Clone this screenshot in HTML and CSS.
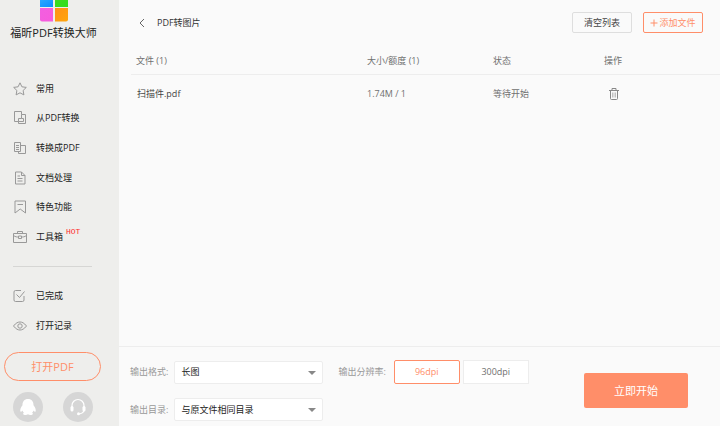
FILE: index.html
```
<!DOCTYPE html>
<html lang="zh-CN">
  <head>
    <meta charset="UTF-8" />
    <meta name="viewport" content="width=device-width, initial-scale=1" />
    <title>福昕PDF转换大师</title>
    <link rel="stylesheet" href="styles.css">
  </head>

  <body>
    <aside class="sidebar">
      <div class="brand">
        <svg class="logo" viewBox="0 0 28 22" aria-hidden="true">
          <defs>
            <linearGradient id="blue" x2="1" y2="1"><stop stop-color="#2aa8ff" /><stop offset="1" stop-color="#0c8cff" /></linearGradient>
            <linearGradient id="green" x2="1" y2="1"><stop stop-color="#3fd820" /><stop offset="1" stop-color="#2ee01c" /></linearGradient>
            <linearGradient id="pink" x2="1" y2="1"><stop stop-color="#f25fe0" /><stop offset="1" stop-color="#f75bdc" /></linearGradient>
            <linearGradient id="orange" x2="1" y2="1"><stop stop-color="#ff9016" /><stop offset="1" stop-color="#ffa60c" /></linearGradient>
          </defs>
          <path fill="url(#blue)" d="M0 0h13v7H0z" />
          <path fill="url(#green)" d="M15 0h13v7H15z" />
          <path fill="url(#pink)" d="M0 8h13v13.500H2a2 2 0 0 1-2-2z" />
          <path fill="url(#orange)" d="M15 8h13v11.500a2 2 0 0 1-2 2H15z" />
        </svg>
        <h1>福昕PDF转换大师</h1>
      </div>

      <nav class="menu">
        <a href="#">
          <svg viewBox="0 0 14 14"><path d="M7 .8l1.900 4 4.400.6-3.200 3.100.8 4.400L7 10.800l-3.900 2.100.8-4.400L.7 5.400l4.400-.6z" /></svg>
          常用
        </a>
        <a href="#">
          <svg viewBox="0 0 14 14"><path d="M5.500 10.500h-4v-10h7v3M5.500 10.500v2h7v-9h-4v4h-3v3M8.500 7.500h2v3h-5" /></svg>
          从PDF转换
        </a>
        <a href="#">
          <svg viewBox="0 0 14 14"><path d="M1.500 1.500h6v9h-6zM3 4.500h3M3 6.500h3M3 8.500h3M7.500 4.500h5v8h-7v-2" /></svg>
          转换成PDF
        </a>
        <a href="#">
          <svg viewBox="0 0 14 14"><path d="M2.500 1h6l3.500 3.500V13H2.500zM8.500 1v3.500H12M4.500 5H7M4.500 7.500h5M4.500 10h5" /></svg>
          文档处理
        </a>
        <a href="#">
          <svg viewBox="0 0 14 14"><path d="M2 1h10.500v12L7.200 9 2 13zM4.500 4.500H10" /></svg>
          特色功能
        </a>
        <a href="#">
          <svg viewBox="0 0 14 14"><path d="M.5 3.500h13v9H.5zM4.500 3.500v-2h5v2M.5 5.500c2 1.500 3.500 1.500 5 1.500M13.500 5.500c-2 1.500-3.500 1.500-5 1.500M5.500 6h3v2.500h-3z" /></svg>
          工具箱
          <sup class="hot">HOT</sup>
        </a>
        <div class="divider"></div>
        <a href="#">
          <svg viewBox="0 0 14 14"><path d="M8 1.500H2.500A1.500 1.500 0 0 0 1 3v8a1.500 1.500 0 0 0 1.500 1.500h7A1.500 1.500 0 0 0 11 11V7M3.500 5.500l3 3 5-6" /></svg>
          已完成
        </a>
        <a href="#">
          <svg viewBox="0 0 14 14"><path d="M.5 7C3 3.800 5 3 7 3s4 .8 6.500 4C11 10.200 9 11 7 11S3 10.200.5 7z" /><circle cx="7" cy="7" r="2.200" /></svg>
          打开记录
        </a>
      </nav>

      <button class="open-pdf" type="button">打开PDF</button>

      <div class="contacts">
        <button type="button" aria-label="QQ">
          <svg viewBox="0 0 30 30"><path fill="#fff" d="M15 7c-3.700 0-5.600 2.500-5.500 6.300-1.600 2-2.600 4.300-2.200 6 .3 1 1.400.2 2.100-.9.300 1 .9 1.800 1.500 2.400-1.200.6-1.200 2 .7 2.200 1.400.1 2.800-.2 3.400-.8.600.6 2 .9 3.400.8 1.900-.2 1.900-1.600.7-2.200.6-.6 1.200-1.400 1.500-2.400.7 1.100 1.800 1.900 2.100.9.400-1.700-.6-4-2.200-6C20.600 9.500 18.700 7 15 7z" /></svg>
        </button>
        <button type="button" aria-label="在线客服">
          <svg viewBox="0 0 30 30">
            <path fill="none" stroke="#fff" stroke-width="1.200" d="M9 15v-1.500a6 6 0 0 1 12 0V15M21 18c-.3 2.500-2 3.500-4.500 3.800" />
            <rect x="7.500" y="14" width="3" height="5.500" rx="1.500" fill="#fff" />
            <rect x="19.500" y="14" width="3" height="5.500" rx="1.500" fill="#fff" />
            <circle cx="15.500" cy="21.800" r="1.500" fill="#fff" />
          </svg>
        </button>
      </div>
    </aside>

    <main>
      <header>
        <button class="back" type="button" aria-label="返回">
          <svg viewBox="0 0 8 10"><path d="M6 1L2 5l4 4" /></svg>
        </button>
        <h2>PDF转图片</h2>
        <button class="btn" type="button">清空列表</button>
        <button class="btn btn-add" type="button">
          <svg viewBox="0 0 8 8"><path d="M4 .5v7M.5 4h7" /></svg>
          添加文件
        </button>
      </header>

      <section class="files">
        <table>
          <thead>
            <tr>
              <th>文件 (1)</th>
              <th class="col-size">大小/额度 (1)</th>
              <th class="col-status">状态</th>
              <th class="col-action">操作</th>
            </tr>
          </thead>
          <tbody>
            <tr>
              <td class="name">扫描件.pdf</td>
              <td>1.74M / 1</td>
              <td>等待开始</td>
              <td>
                <button class="delete" type="button" aria-label="删除">
                  <svg viewBox="0 0 10 12"><path d="M0 2.500h10M3 2.500v-2h4v2M1.500 2.500v8a1 1 0 0 0 1 1h5a1 1 0 0 0 1-1v-8" /><path class="slats" d="M3.500 4.500v5M5 4.500v5M6.500 4.500v5" /></svg>
                </button>
              </td>
            </tr>
          </tbody>
        </table>
      </section>

      <form class="options">
        <div class="fields">
          <label for="format">输出格式:</label>
          <div class="select">
            <select id="format"><option>长图</option></select>
          </div>
          <fieldset>
            <legend>输出分辨率:</legend>
            <label class="dpi"><input type="radio" name="dpi" checked />96dpi</label>
            <label class="dpi"><input type="radio" name="dpi" />300dpi</label>
          </fieldset>
          <label for="folder">输出目录:</label>
          <div class="select">
            <select id="folder"><option>与原文件相同目录</option></select>
          </div>
        </div>
        <button class="start" type="button">立即开始</button>
      </form>
    </main>
  </body>
</html>
```
FILE: styles.css
```
:root {
  --bg: #fafafa;
  --side-bg: #eeeeec;
  --accent: #ff8e69;
  --border: #dedede;
  --line: #ededed;
  --text: #222;
  --text-mid: #707070;
  --text-muted: #999;
}

* {
  box-sizing: border-box;
}

body,
button,
select {
  font-family: "Open Sans", "Noto Sans CJK SC", sans-serif;
  font-size: 9px;
  line-height: 14px;
}

body {
  margin: 0;
  height: 100vh;
  display: flex;
  overflow: hidden;
  background: var(--bg);
  color: var(--text);
}

button {
  padding: 0;
  border: none;
  background: none;
  color: inherit;
  cursor: pointer;
}

svg {
  display: block;
  flex: none;
}

/* sidebar */
.sidebar {
  flex: 0 0 119px;
  display: flex;
  flex-direction: column;
  padding-bottom: 4px;
  background: var(--side-bg);
}

.brand {
  display: flex;
  flex-direction: column;
  align-items: center;
  gap: 3px;
  padding-right: 12px;
  margin-bottom: 33px;
}

.logo {
  width: 28px;
  height: 22px;
}

.brand h1 {
  margin: 0;
  font-size: 11px;
  font-weight: 400;
  line-height: 16px;
  white-space: nowrap;
}

.menu {
  flex: 1;
  display: grid;
  grid-auto-rows: 1fr;
  align-items: center;
  padding: 0 13px;
}

.menu a {
  display: flex;
  align-items: center;
  gap: 9px;
  color: var(--text);
  text-decoration: none;
}

.menu svg {
  width: 14px;
  height: 14px;
  fill: none;
  stroke: #999;
}

.menu .hot {
  align-self: flex-start;
  margin: -2px 0 0 -6px;
  color: #ff2a2a;
  font-family: "Liberation Mono", monospace;
  font-size: 8px;
  line-height: 8px;
}

.divider {
  width: 79px;
  border-top: 1px solid #d6d6d4;
}

.open-pdf {
  height: 29px;
  margin: 11px 18px 11px 4px;
  border: 1px solid var(--accent);
  border-radius: 15px;
  color: var(--accent);
  font-size: 11px;
}

.contacts {
  display: flex;
  gap: 20px;
  padding-left: 13px;
}

.contacts button {
  width: 30px;
  height: 30px;
  border-radius: 50%;
  background: #d6d6d6;
}

/* main area */
main {
  flex: 1;
  min-width: 0;
  display: flex;
  flex-direction: column;
}

header {
  display: flex;
  align-items: center;
  gap: 11px;
  padding: 12px 17px 12px 19px;
}

header h2 {
  flex: 1;
  margin: 0;
  color: #333;
  font-size: 9px;
  font-weight: 400;
}

.back svg {
  width: 8px;
  height: 10px;
  fill: none;
  stroke: #666;
}

.btn {
  width: 60px;
  height: 21px;
  border: 1px solid var(--border);
  border-radius: 2px;
  color: #444;
}

.btn-add {
  display: flex;
  align-items: center;
  justify-content: center;
  gap: 1px;
  border-color: var(--accent);
  color: var(--accent);
}

.btn-add svg {
  width: 8px;
  height: 8px;
  stroke: currentColor;
}

.files {
  flex: 1;
  padding-left: 12px;
}

table {
  width: 100%;
  table-layout: fixed;
  border-collapse: collapse;
  color: var(--text-mid);
}

th,
td {
  padding: 0;
  font-weight: 400;
  text-align: left;
}

th {
  height: 29px;
  padding-top: 4px;
  border-bottom: 1px solid var(--line);
}

td {
  height: 39px;
}

th:first-child {
  padding-left: 5px;
}

.name {
  padding-left: 6px;
  color: #444;
}

.col-size {
  width: 126px;
}

.col-status {
  width: 111px;
}

.col-action {
  width: 116px;
}

.delete {
  display: block;
  margin-left: 5px;
}

.delete svg {
  width: 10px;
  height: 12px;
  fill: none;
  stroke: #888;
}

.delete .slats {
  stroke-width: 0.5;
}

/* output options */
.options {
  display: flex;
  align-items: flex-start;
  justify-content: space-between;
  padding: 13px 32px 5px 11px;
  border-top: 1px solid var(--line);
}

.fields {
  display: grid;
  grid-template-columns: auto 149px auto;
  align-items: center;
  column-gap: 6px;
  row-gap: 14px;
  color: var(--text-muted);
}

.select {
  position: relative;
}

.select::after {
  content: "";
  position: absolute;
  top: 10px;
  right: 7px;
  border: 4px solid transparent;
  border-top-color: #888;
  border-bottom: none;
  pointer-events: none;
}

select {
  display: block;
  width: 100%;
  height: 23px;
  padding: 0 6px;
  appearance: none;
  border: 1px solid var(--line);
  border-radius: 2px;
  background: #fff;
  color: var(--text);
}

fieldset {
  display: flex;
  align-items: center;
  gap: 3px;
  min-width: 0;
  margin: 0 0 0 9px;
  padding: 0;
  border: none;
}

legend {
  float: left;
  padding: 0;
  margin-right: 5px;
}

.dpi {
  width: 66px;
  padding: 4px 0;
  border: 1px solid var(--line);
  background: #fff;
  color: var(--text-mid);
  text-align: center;
  cursor: pointer;
}

.dpi:has(:checked) {
  border-color: var(--accent);
  border-radius: 2px;
  color: var(--accent);
}

.dpi input {
  position: absolute;
  opacity: 0;
  pointer-events: none;
}

.start {
  width: 104px;
  height: 35px;
  margin-top: 13px;
  border-radius: 2px;
  background: var(--accent);
  color: #fff;
  font-size: 11px;
}
```
